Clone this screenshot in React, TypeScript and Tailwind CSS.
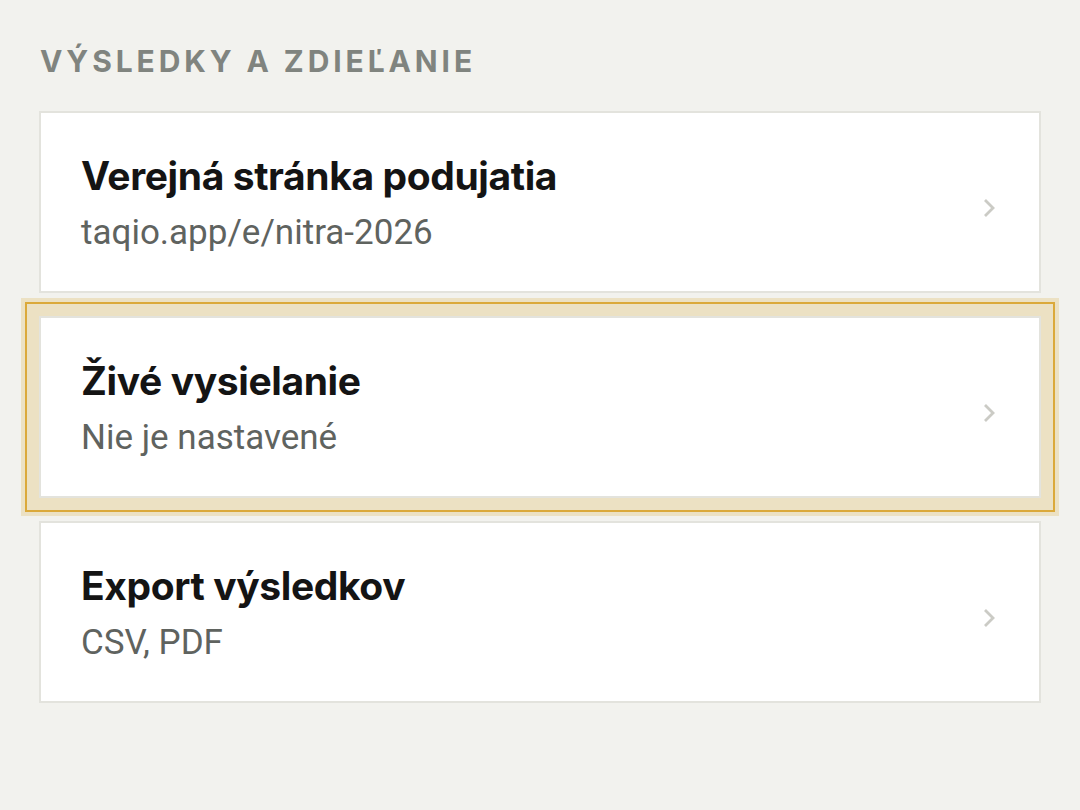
import React from "react";

type Row = { title: string; sub: string; focused?: boolean };

const rows: Row[] = [
  { title: "Verejná stránka podujatia", sub: "taqio.app/e/nitra-2026" },
  { title: "Živé vysielanie", sub: "Nie je nastavené", focused: true },
  { title: "Export výsledkov", sub: "CSV, PDF" },
];

function Chevron() {
  return (
    <svg width="16" height="20" viewBox="0 0 16 20" fill="none" className="mt-[12px] shrink-0">
      <path d="M4 2 L12 10 L4 18" stroke="#cbcbc5" strokeWidth="2.8" strokeLinecap="butt" strokeLinejoin="miter" />
    </svg>
  );
}

function SettingsRow({ row }: { row: Row }) {
  return (
    <div
      className={
        "flex h-[182px] items-center justify-between border-2 border-[#e3e3dd] bg-white pl-[40px] pr-[42px] " +
        (row.focused
          ? "outline-2 outline-offset-[12px] outline-[#dba93a] shadow-[0_0_0_18px_rgba(232,212,160,0.55)]"
          : "")
      }
    >
      <div className="flex flex-col gap-[13px] pt-[3px]">
        <div className="font-['Inter',sans-serif] text-[39px] font-bold leading-[46px] tracking-[-0.01em] text-[#141414]">
          {row.title}
        </div>
        <div className="font-['Roboto',sans-serif] text-[35px] leading-[42px] text-[#5f635f]">{row.sub}</div>
      </div>
      <Chevron />
    </div>
  );
}

export default function App() {
  return (
    <div className="min-h-[810px] w-full bg-[#f2f2ee] px-[39px] pt-[43px]">
      <h2 className="pl-[1px] font-['Inter',sans-serif] text-[30px] font-bold uppercase leading-[36px] tracking-[0.13em] text-[#80847f]">
        Výsledky a zdieľanie
      </h2>
      <div className="mt-[32px] flex flex-col gap-[23px]">
        {rows.map((r) => (
          <SettingsRow key={r.title} row={r} />
        ))}
      </div>
    </div>
  );
}
